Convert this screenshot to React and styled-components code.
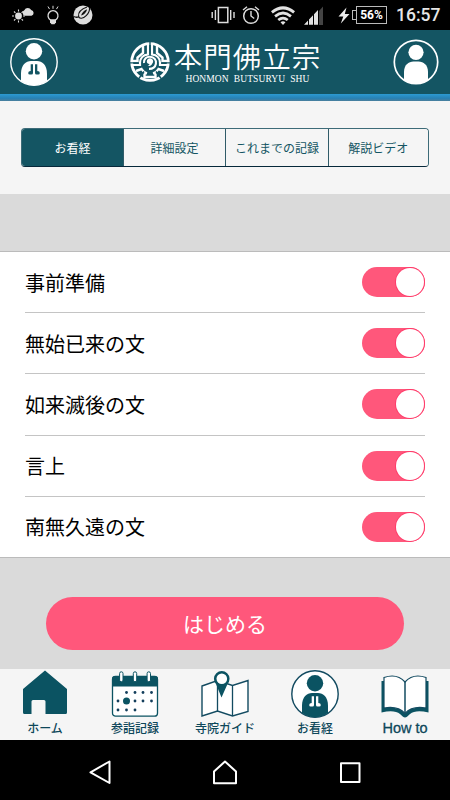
import { useState } from 'react';
import styled, { createGlobalStyle } from 'styled-components';

const tabs = ['お看経', '詳細設定', 'これまでの記録', '解説ビデオ'];
const chapters = ['事前準備', '無始已来の文', '如来滅後の文', '言上', '南無久遠の文'];

function StatusBar() {
  return (
    <Status>
      <StatusIcon w={22} ml={12} height="20" viewBox="0 0 22 20">
        <circle cx="6.5" cy="11" r="3.4" fill="#ddd" />
        <path d="M6.5 4.5v2M6.5 15.5v2M0 11h2M11 11h2M2 6.5l1.400 1.400M2 15.5l1.400-1.400M9.600 14.100l1.400 1.400M9.600 7.900l1.400-1.400" stroke="#ddd" strokeWidth="1.1" />
        <path d="M13 10.800a3 3 0 0 1-.7-5.600A4 4 0 0 1 19.200 5a3 3 0 0 1 .3 5.800z" fill="#ddd" />
      </StatusIcon>
      <StatusIcon w={14} ml={12} height="20" viewBox="0 0 14 20">
        <path d="M4.600 15.100a5 5 0 1 1 4.800 0z" fill="none" stroke="#ddd" strokeWidth="1.3" />
        <path d="M4 14.500h6v2.700l-1.500 2h-3L4 17.200z" fill="#ddd" />
        <path d="M7 .8v3M2 1.500l1.500 2.600M12 1.500l-1.500 2.600" stroke="#ddd" strokeWidth="1" />
      </StatusIcon>
      <StatusIcon w={20} ml={13} height="20" viewBox="0 0 20 20">
        <circle cx="10" cy="10" r="9.5" fill="#ddd" />
        <path d="M14 2C8.500 4 5 7.500 5.600 11.300c.5 2.900 4.500 2.400 7.600-.6 2.200-2.200 3.500-5 3.300-7.700" fill="none" stroke="#111" strokeWidth="1.1" />
        <path d="M.6 11.500c2 1 3.500.9 5.200.4" fill="none" stroke="#111" strokeWidth="1.3" />
        <path d="M8 10.500C9 7.500 11 5.500 14.200 4.200 13.500 7 11.200 9.800 8 10.500z" fill="#111" />
      </StatusIcon>
      <StatusIcon w={24} ml={118} height="20" viewBox="0 0 24 20">
        <rect x="7.400" y="2.500" width="9.400" height="15" fill="none" stroke="#ddd" strokeWidth="1.5" />
        <path d="M4.400 5v10M19.700 5v10M1.200 7v6M23 7v6" stroke="#ddd" strokeWidth="1.4" />
      </StatusIcon>
      <StatusIcon w={18} ml={7} height="20" viewBox="0 0 18 20">
        <circle cx="9" cy="11" r="7.3" fill="none" stroke="#ddd" strokeWidth="1.5" />
        <path d="M9 6v5l3.200 2.500M1 5l4-3.200M17 5l-4-3.200" fill="none" stroke="#ddd" strokeWidth="1.4" />
      </StatusIcon>
      <StatusIcon w={26} ml={10} height="20" viewBox="0 0 26 20">
        <path d="M1 6.300q12-10 24 0l-1.800 2.300q-10.200-8.400-20.400 0zM4.200 10.200q8.800-7.200 17.600 0L20.100 12.400q-7.100-5.600-14.200 0zM7.400 13.900q5.600-4.400 11.200 0l-1.700 2.100q-3.900-3-7.800 0zM10.500 17.300q2.500-1.900 5 0L13 20z" fill="#e2e2e2" />
      </StatusIcon>
      <StatusIcon w={20} ml={8} height="20" viewBox="0 0 20 20">
        <path d="M15 6L19 1.500V20h-4z" fill="#444" />
        <path d="M0 19.800l4-4.300v4.300zM5 14.500l4-4.200v9.500H5zM10 9.300l4-4.200v14.700h-4z" fill="#e2e2e2" />
      </StatusIcon>
      <StatusIcon w={12} ml={14} height="20" viewBox="0 0 12 20">
        <path d="M8.500 2.500L.5 11.500h4.800L2.800 18.500 11.500 9H6.800z" fill="#eee" />
      </StatusIcon>
      <BatteryNub />
      <Battery>56%</Battery>
      <Clock>16:57</Clock>
    </Status>
  );
}

function PrayingIcon({ size, line, body, inside, hands }) {
  return (
    <svg width={size} height={size} viewBox="0 0 48 48">
      <circle cx="24" cy="24" r="23.2" fill={inside} stroke={line} strokeWidth="1.4" />
      <circle cx="24" cy="13.2" r="8.2" fill={body} />
      <path d="M11 43V35.500C11 27 16 23 21 23h6c5 0 10 4 10 12.500V43c-7.500 5.600-18.500 5.600-26 0z" fill={body} />
      <path d="M20.700 26.300H23V35q0 1.500-1.500 1.500h-1.700q-1.600 0-1.600-1.600t2.500-1.900zM27.300 26.300H25V35q0 1.500 1.500 1.500h1.700q1.600 0 1.600-1.600t-2.500-1.900z" fill={hands} />
    </svg>
  );
}

function UserIcon() {
  return (
    <svg width="46" height="46" viewBox="0 0 46 46">
      <circle cx="23" cy="23" r="21.7" fill="none" stroke="#fff" strokeWidth="1.7" />
      <circle cx="23" cy="13.3" r="7.6" fill="#fff" />
      <path d="M11 41V33c0-7 4.500-10.500 9.500-10.500h5c5 0 9.500 3.500 9.500 10.500v8c-7 4.700-17 4.700-24 0z" fill="#fff" />
    </svg>
  );
}

function Emblem() {
  return (
    <svg width="40" height="40" viewBox="0 0 40 40" fill="none" stroke="#fff">
      <circle cx="20" cy="20" r="18.3" strokeWidth="2.8" />
      <path d="M13 3.500v7.500L7.500 15.500V19H3M27 3.500v7.500l5.500 4.500V19H37" strokeWidth="2.4" />
      <path d="M18 2.500v9.800C13 13 10 16.500 10 20.500V23H3M22 2.500v9.800C27 13 30 16.500 30 20.500V23h7" strokeWidth="2.2" />
      <path d="M6 29l5.500-2c1.300 2.300 3 3.600 5.500 4.300M34 29l-5.500-2c-1.300 2.300-3 3.600-5.500 4.300M14.500 31.500v3.500h11v-3.500" strokeWidth="2.4" />
      <path d="M14 21c-.5-4 2.700-6.500 6-6.300 4 .2 6.600 3.400 5.900 7-.7 3.500-3.400 5.200-6.900 5.200" strokeWidth="2.1" />
      <path d="M16.800 19.500a3.200 3.200 0 1 1 5.400 2.200c-.7 1.700-2.300 2.500-4.500 2.300 1.200-.6 1.800-1.200 1.700-2-1.600 0-2.600-1-2.600-2.500z" fill="#fff" stroke="none" />
      <path d="M20 0v11.500M0 20.900h8.500M31.500 20.900H40M8.500 37l5.500-7.500M31.500 37L26 29.500" stroke="#145563" strokeWidth="1.4" />
    </svg>
  );
}

function HomeIcon() {
  return (
    <svg width="48" height="48" viewBox="0 0 48 48">
      <path d="M24 .5L46 19v23.500q0 1.500-1.500 1.500H24.500V31.500q0-1.500-1.500-1.500H12q-1.500 0-1.500 1.500V44h-7Q2 44 2 42.500V19z" fill="#0b5362" />
    </svg>
  );
}

function CalendarIcon() {
  const dots = [[15.5, 22.5], [24, 22.5], [32, 22.5], [40.5, 22.5], [7, 31], [24, 31], [32, 31], [40.5, 31], [7, 40], [15.5, 40], [24, 40]];
  return (
    <svg width="48" height="48" viewBox="0 0 48 48">
      <rect x="1.5" y="6.5" width="45" height="39.7" rx="3" fill="#fff" stroke="#0b5362" strokeWidth="1.3" />
      <path d="M1 16.500V9q0-3 3-3h40q3 0 3 3v7.500z" fill="#0b5362" />
      {[10.3, 24, 37.8].map((x) => (
        <rect key={x} x={x - 1.7} y="1.8" width="3.4" height="10" rx="1.7" fill="#fff" stroke="#0b5362" strokeWidth="1" />
      ))}
      {dots.map(([x, y]) => <circle key={`${x}-${y}`} cx={x} cy={y} r="1.4" fill="#133e5b" />)}
      <circle cx="15.5" cy="31" r="3.5" fill="#0b5362" />
    </svg>
  );
}

function MapIcon() {
  return (
    <svg width="48" height="48" viewBox="0 0 48 48">
      <path d="M1 16L16.500 10.500 31.500 15.500 47 10.500v31L31.500 46 16.500 41 1 46z" fill="#fff" stroke="#134b61" strokeWidth="1.4" />
      <path d="M16.500 14v27M31.500 15.500V46" stroke="#134b61" strokeWidth="1.3" />
      <path d="M20.500 27.500L15 14a7.800 7.800 0 1 1 11.500 0z" fill="#0b5362" />
      <circle cx="20.8" cy="8.8" r="5.3" fill="#fff" />
    </svg>
  );
}

function BookIcon() {
  return (
    <svg width="48" height="48" viewBox="0 0 48 48">
      <path d="M.5 11h47v31.500q-13-3-18.500 1.500l-3 2.800q-2 1.200-4 0l-3-2.800Q13.500 39.500.5 42.500z" fill="#0b5362" />
      <path d="M3 38V7.500Q16 3 24 12 32 3 45 7.500V38Q31 35.500 24 43.500 17 35.500 3 38z" fill="#fff" stroke="#134b61" strokeWidth="1.2" />
      <path d="M24 12v31" stroke="#134b61" strokeWidth="1.5" />
    </svg>
  );
}

export default function App() {
  const [activeTab, setActiveTab] = useState(0);
  const [enabled, setEnabled] = useState(chapters.map(() => true));

  const toggle = (index) => {
    setEnabled(enabled.map((value, i) => (i === index ? !value : value)));
  };

  return (
    <>
      <GlobalStyle />
      <Screen>
        <StatusBar />
        <Header>
          <PrayingIcon size={48} line="#fff" body="#fff" inside="none" hands="#145563" />
          <Brand>
            <Emblem />
            <BrandText>
              <BrandName>本門佛立宗</BrandName>
              <BrandLatin>HONMON BUTSURYU SHU</BrandLatin>
            </BrandText>
          </Brand>
          <UserIcon />
        </Header>
        <Stripe />
        <TabArea>
          <Tabs>
            {tabs.map((tab, index) => (
              <Tab key={tab} $active={index === activeTab} onClick={() => setActiveTab(index)}>
                {tab}
              </Tab>
            ))}
          </Tabs>
        </TabArea>
        <List>
          {chapters.map((chapter, index) => (
            <Row key={chapter}>
              <span>{chapter}</span>
              <Switch role="switch" aria-checked={enabled[index]} $on={enabled[index]} onClick={() => toggle(index)}>
                <Knob $on={enabled[index]} />
              </Switch>
            </Row>
          ))}
        </List>
        <StartArea>
          <StartButton>はじめる</StartButton>
        </StartArea>
        <BottomMenu>
          <MenuItem><HomeIcon /><span>ホーム</span></MenuItem>
          <MenuItem><CalendarIcon /><span>参詣記録</span></MenuItem>
          <MenuItem><MapIcon /><span>寺院ガイド</span></MenuItem>
          <MenuItem>
            <PrayingIcon size={48} line="#134b61" body="#0b5362" inside="#fff" hands="#fff" />
            <span>お看経</span>
          </MenuItem>
          <MenuItem $latin><BookIcon /><span>How to</span></MenuItem>
        </BottomMenu>
        <SystemNav>
          <svg width="26" height="26" viewBox="0 0 26 26"><path d="M22.500 2.500v21.500L3.500 13.300z" /></svg>
          <svg width="26" height="26" viewBox="0 0 26 26"><path d="M2 24.300V12.500L13 2.500l11 10v11.800z" /></svg>
          <svg width="26" height="26" viewBox="0 0 26 26"><path d="M4 4.300h18.500V23H4z" /></svg>
        </SystemNav>
      </Screen>
    </>
  );
}

const GlobalStyle = createGlobalStyle`
  * {
    box-sizing: border-box;
  }
  body {
    margin: 0;
    font-family: 'Noto Sans CJK JP', sans-serif;
  }
  button {
    font-family: inherit;
    border: none;
    padding: 0;
  }
  svg {
    display: block;
    flex-shrink: 0;
  }
`;

const Screen = styled.div`
  display: flex;
  flex-direction: column;
  width: 450px;
  height: 800px;
  overflow: hidden;
  background-color: #dadada;
`;

const Status = styled.div`
  display: flex;
  align-items: center;
  height: 30px;
  flex-shrink: 0;
  background-color: #000;
`;

const StatusIcon = styled.svg`
  width: ${(props) => props.w}px;
  margin-left: ${(props) => props.ml}px;
`;

const BatteryNub = styled.div`
  width: 4px;
  height: 10px;
  margin-left: 2px;
  border: 1px solid #bbb;
  border-right: none;
`;

const Battery = styled.div`
  width: 31px;
  height: 18px;
  border: 1px solid #bbb;
  color: #fff;
  font: bold 12px/17px Roboto, sans-serif;
  text-align: center;
`;

const Clock = styled.div`
  margin-left: 9px;
  color: #e6e6e6;
  font: 500 17.5px/30px Roboto, sans-serif;
`;

const Header = styled.header`
  display: flex;
  align-items: center;
  justify-content: space-between;
  height: 64px;
  flex-shrink: 0;
  padding: 0 11px 0 10px;
  background-color: #145563;
`;

const Brand = styled.div`
  display: flex;
  align-items: center;
  gap: 4px;
`;

const BrandText = styled.div`
  display: flex;
  flex-direction: column;
  align-items: center;
  padding-bottom: 2px;
  color: #fff;
  white-space: nowrap;
`;

const BrandName = styled.div`
  font-size: 28.5px;
  font-weight: 350;
  line-height: 37px;
  letter-spacing: 1px;
`;

const BrandLatin = styled.div`
  font: 9.5px/11px 'Liberation Serif', serif;
  letter-spacing: 0.1px;
  word-spacing: 2.5px;
`;

const Stripe = styled.div`
  height: 7px;
  flex-shrink: 0;
  background: linear-gradient(#2c9ad2, #2782b5 60%, #4b7f9c);
`;

const TabArea = styled.div`
  height: 93px;
  flex-shrink: 0;
  padding: 27px 21.5px 0 21px;
  background-color: #f5f5f5;
`;

const Tabs = styled.div`
  display: grid;
  grid-template-columns: 101px 102px 103px 1fr;
  height: 39px;
  border: 1px solid #3d6b78;
  border-bottom-color: #06283a;
  border-radius: 4px;
  overflow: hidden;
`;

const Tab = styled.button`
  font-size: 12px;
  color: ${(props) => (props.$active ? '#fff' : '#145563')};
  background-color: ${(props) => (props.$active ? '#145563' : '#f5f5f5')};

  & + & {
    border-left: 1px solid #305b68;
  }
`;

const List = styled.div`
  height: 307px;
  flex-shrink: 0;
  margin-top: 57px;
  padding: 0 25px;
  border-top: 1px solid #bbb;
  border-bottom: 1px solid #bbb;
  background-color: #fff;
`;

const Row = styled.div`
  display: flex;
  align-items: center;
  justify-content: space-between;
  height: 61.2px;
  border-bottom: 1px solid #c4c4c4;
  font-size: 20px;
  color: #000;

  &:last-child {
    border-bottom-color: transparent;
  }
`;

const Switch = styled.button`
  display: flex;
  align-items: center;
  justify-content: ${(props) => (props.$on ? 'flex-end' : 'flex-start')};
  width: 63px;
  height: 30px;
  padding: 1px;
  border-radius: 15px;
  background-color: ${(props) => (props.$on ? '#ff577b' : '#ccc')};
`;

const Knob = styled.div`
  width: 28px;
  height: 28px;
  border-radius: 50%;
  background-color: #fff;
  box-shadow: 0 0 0 1px ${(props) => (props.$on ? '#ff3c6b' : '#bbb')};
`;

const StartArea = styled.div`
  display: flex;
  justify-content: center;
  height: 111px;
  flex-shrink: 0;
  padding-top: 39px;
`;

const StartButton = styled.button`
  width: 358px;
  height: 53px;
  padding-bottom: 2px;
  border-radius: 27px;
  background-color: #ff577b;
  color: #fff;
  font-size: 21px;
`;

const BottomMenu = styled.nav`
  display: grid;
  grid-template-columns: repeat(5, 90px);
  height: 71px;
  flex-shrink: 0;
  background-color: #f5f5f5;
`;

const MenuItem = styled.div`
  display: flex;
  flex-direction: column;
  align-items: center;
  padding-top: 1px;
  color: #0d475a;
  font-family: ${(props) => (props.$latin ? "'Liberation Sans'" : "'Noto Sans CJK JP'")}, sans-serif;
  font-size: ${(props) => (props.$latin ? 14.5 : 12)}px;
  font-weight: 500;
  -webkit-text-stroke: ${(props) => (props.$latin ? 0.3 : 0)}px;
  line-height: 20px;
  white-space: nowrap;
`;

const SystemNav = styled.div`
  display: flex;
  justify-content: space-between;
  align-items: center;
  height: 60px;
  flex-shrink: 0;
  padding: 4px 87px 0;
  background-color: #000;

  path {
    fill: none;
    stroke: #fff;
    stroke-width: 2;
    stroke-linejoin: round;
  }
`;
